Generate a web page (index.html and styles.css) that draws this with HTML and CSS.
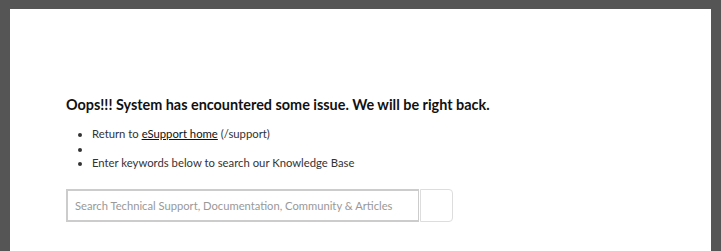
FILE: index.html
```html
<!DOCTYPE html>
<html lang="en">
<head>
    <meta charset="UTF-8">
    <meta name="viewport" content="width=device-width, initial-scale=1.0">
    <title>eSupport - Error</title>
    <link rel="stylesheet" href="styles.css">
</head>
<body>
    <div class="page">
        <div class="content">
            <h2>Oops!!! System has encountered some issue. We will be right back.</h2>
            <ul class="links">
                <li>Return to <a href="/support">eSupport home</a> (/support)</li>
                <li></li>
                <li>Enter keywords below to search our Knowledge Base</li>
            </ul>
            <form class="search">
                <input type="text" class="search-input" placeholder="Search Technical Support, Documentation, Community &amp; Articles">
                <button type="button" class="search-button"></button>
            </form>
        </div>
    </div>
</body>
</html>
```

FILE: styles.css
```css
html, body {
    height: 100%;
}
body {
    font-family: Lato, "Open Sans", Arial, sans-serif;
    background-color: #555555;
    margin: 0;
    padding: 0;
}
.page {
    background-color: #fff;
    margin: 0 10px 0 10px;
    position: relative;
    top: 9px;
    height: 100%;
}
.content {
    padding: 86px 0 0 56px;
}
h2 {
    font-size: 14.4px;
    font-weight: bold;
    color: #111;
    margin: 0 0 12px 0;
    line-height: 20px;
}
.links {
    margin: 0;
    padding-left: 26px;
    font-size: 11.3px;
    line-height: 14.5px;
    color: #333;
}
.links a {
    color: #111;
}
.search {
    display: flex;
    margin-top: 18px;
}
.search-input {
    width: 353px;
    height: 33px;
    box-sizing: border-box;
    border: 1px solid #ccc;
    border-width: 2px 1px 2px 2px;
    padding: 0 7px;
    font-family: inherit;
    font-size: 11.2px;
}
.search-input::placeholder {
    color: #999;
}
.search-button {
    width: 33px;
    height: 33px;
    margin-left: 1px;
    background: #fff;
    border: 1px solid #ddd;
    border-radius: 0 4px 4px 0;
}
```
